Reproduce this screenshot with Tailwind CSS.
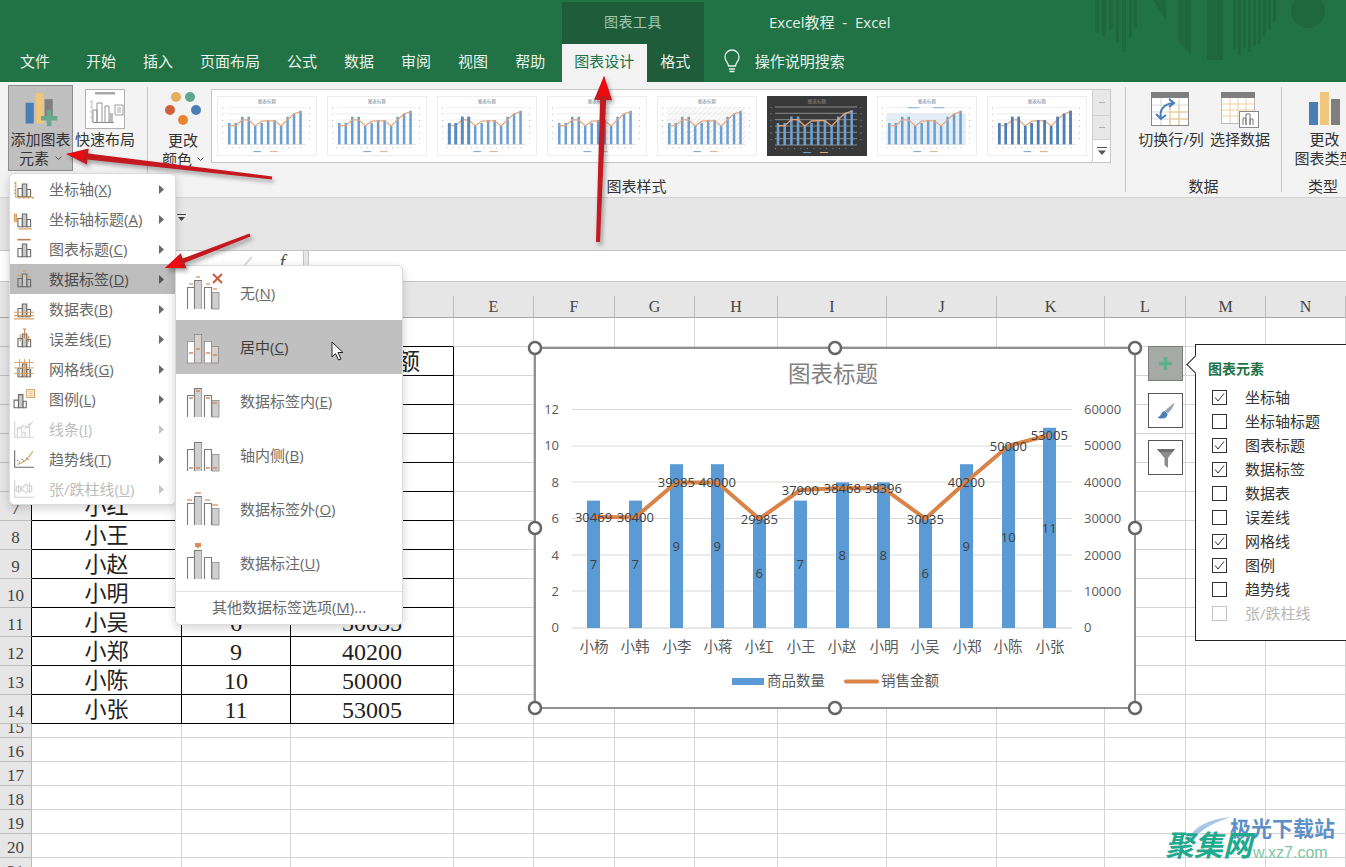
<!DOCTYPE html>
<html lang="zh-CN">
<head>
<meta charset="utf-8">
<title>Excel教程 - Excel</title>
<script src="https://cdn.jsdelivr.net/npm/@tailwindcss/browser@4"></script>
</head>
<body>
<svg class="absolute w-0 h-0" aria-hidden="true">
  <defs>
    <pattern id="hatch" width="5" height="5" patternUnits="userSpaceOnUse"><path d="M0 5L5 0M-1 1L1 -1M4 6L6 4" stroke="#d5d5d5" stroke-width=".8"/></pattern>
    <symbol id="mini" viewBox="0 0 100 60">
      <text x="50" y="6.5" font-size="4.6" text-anchor="middle" fill="#8a8a8a">图表标题</text>
      <path d="M8 11H90M8 17.3H90M8 23.7H90M8 30H90M8 36.3H90M8 42.7H90" stroke="#dedede" stroke-width=".5"/>
      <path d="M8 49H90" stroke="#c5c5c5" stroke-width=".6"/>
      <path d="M4 11V49M94 11V49M8 52.5H90" stroke="#a0a0a0" stroke-width="1.2" stroke-dasharray=".8 5.6"/>
      <path d="M11 49V27M17.7 49V27M24.4 49V20.5M31.1 49V20.5M37.8 49V30M44.5 49V27M51.2 49V23.7M57.9 49V23.7M64.6 49V30M71.3 49V20.5M78 49V17.3M84.7 49V14.2" stroke="#6c9fd2" stroke-width="2.6"/>
      <polyline points="11,29.7 17.7,29.7 24.4,23.7 31.1,23.7 37.8,30 44.5,25 51.2,24.6 57.9,24.7 64.6,30 71.3,23.5 78,17.3 84.7,15.4" fill="none" stroke="#e5a77c" stroke-width="1.3"/>
      <path d="M36 56.5H44" stroke="#6c9fd2" stroke-width="1"/><path d="M53 56.5H61" stroke="#e5a77c" stroke-width="1"/>
    </symbol>
    <symbol id="smallbars" viewBox="0 0 20 20">
      <path d="M4.5 17V9.5H8.5V17ZM12.5 17V10.5H16V17Z" fill="none" stroke="#6a6a6a" stroke-width="1"/>
      <path d="M8.5 17V5.5H12.5V17Z" fill="#c9c9c9" stroke="#6a6a6a" stroke-width="1"/>
    </symbol>
    <symbol id="bigbars" viewBox="0 0 40 40">
      <path d="M1.5 36V14.500H8.500M15.500 36V7.500H8.500V36M18.500 36V14.500H25.500V36" fill="none" stroke="#7a7a7a" stroke-width="1.100"/>
      <rect x="9" y="8" width="6.500" height="28" fill="#cfcfcf"/>
      <rect x="26" y="19.500" width="7" height="16.500" fill="#cfcfcf" stroke="#8a8a8a" stroke-width=".8"/>
    </symbol>
    <symbol id="bigbarswhite" viewBox="0 0 40 40">
      <rect x="1.500" y="14.500" width="7" height="21.500" fill="#fff" stroke="#8a8a8a" stroke-width=".8"/>
      <rect x="8.500" y="7.500" width="7" height="28.500" fill="#d8d0cc" stroke="#8a8a8a" stroke-width=".8"/>
      <rect x="18.500" y="14.500" width="7" height="21.500" fill="#fff" stroke="#8a8a8a" stroke-width=".8"/>
      <rect x="25.500" y="19.500" width="7" height="16.500" fill="#d8d0cc" stroke="#8a8a8a" stroke-width=".8"/>
    </symbol>
  </defs>
</svg>

<div class="relative w-[1346px] h-[867px] overflow-hidden bg-white flex flex-col font-['Open_Sans','Noto_Sans_CJK_SC',sans-serif] text-[15px] text-[#333]">

  <!-- Title area -->
  <header class="relative h-[82px] shrink-0 bg-[#217346] flex flex-col text-[#e9f2ec]">
    <svg class="absolute left-[1090px] top-0 w-[240px] h-[62px]" viewBox="1090 0 240 62" fill="#1f673f">
      <path d="M1095 0h4v33h-4zM1102 0h4v36h-4zM1109 0h4v30h-4zM1116 0h3v42h-3zM1122 0h4v52h-4zM1129 0h3v38h-3zM1134 0h3v28h-3z"/>
      <path d="M1153 0h13v20z"/>
      <path d="M1178 0h13v54l-13-12zM1207 0h16v60h-16z"/>
      <path d="M1233 0h3v50h-3zM1238 0h3v55h-3zM1243 0h3v48h-3zM1248 0h3v52h-3zM1253 0h3v46h-3zM1258 0h3v44h-3zM1263 0h3v36h-3zM1268 0h3v30h-3zM1273 0h3v22h-3z"/>
      <circle cx="1308" cy="11" r="17"/>
    </svg>
    <div class="relative h-[44px] flex pl-[562px]">
      <div class="w-[142px] mt-[2px] bg-[#1f5c3a] text-[#9fc9b0] text-center text-[14px] leading-[40px] tracking-[0.5px]">图表工具</div>
      <div class="ml-[65px] leading-[44px] whitespace-pre text-[#e3f0e8]">Excel教程  -  Excel</div>
    </div>
    <nav class="relative h-[38px] flex pl-[6.5px] leading-[34px]">
      <div class="px-[13.5px] mr-[9px]">文件</div>
      <div class="px-[13.5px]">开始</div>
      <div class="px-[13.5px]">插入</div>
      <div class="px-[13.5px]">页面布局</div>
      <div class="px-[13.5px]">公式</div>
      <div class="px-[13.5px]">数据</div>
      <div class="px-[13.5px]">审阅</div>
      <div class="px-[13.5px]">视图</div>
      <div class="px-[13.5px] mr-[3px]">帮助</div>
      <div class="w-[85px] bg-[#f3f3f3] text-[#217346] text-center">图表设计</div>
      <div class="w-[57px] bg-[#1f5c3a] text-center">格式</div>
      <svg class="w-[20px] h-[26px] ml-[18px] mt-[4px]" viewBox="0 0 20 26" fill="none" stroke="#e9f2ec" stroke-width="1.300">
        <path d="M6.500 18c0-3-3.500-4.500-3.500-9a7 7 0 0 1 14 0c0 4.500-3.500 6-3.500 9z"/>
        <path d="M7 21h6M7.500 23.500h5"/>
      </svg>
      <div class="ml-[13px]">操作说明搜索</div>
    </nav>
  </header>

  <!-- Ribbon -->
  <section class="h-[116px] shrink-0 bg-[#f3f3f3] border-b border-[#d2d2d2] flex items-start">
    <div class="ml-[8px] mt-[3px] w-[65px] h-[86px] shrink-0 bg-[#bfbfbf] border border-[#8c8c8c] flex flex-col items-center text-center leading-[19px]">
      <svg class="w-[40px] h-[38px] mt-[5px] shrink-0" viewBox="0 0 40 42">
        <rect x="3" y="13" width="9" height="23" fill="#4a7fb6"/>
        <rect x="14" y="2" width="9" height="34" rx="2" fill="#f0c67c"/>
        <rect x="24" y="9" width="9" height="23" fill="#7f7f7f"/>
        <path d="M29 21V39M20 30H38" stroke="#6aa88a" stroke-width="5"/>
      </svg>
      <div class="mt-[1px] whitespace-nowrap">添加图表</div>
      <div class="flex items-center gap-[6px]">元素<svg class="w-[7px] h-[5px]" viewBox="0 0 7 5" fill="none" stroke="#555" stroke-width="1"><path d="M.5 .5L3.500 3.500L6.500 .500"/></svg></div>
    </div>
    <div class="ml-[2px] mt-[3px] w-[60px] h-[86px] shrink-0 flex flex-col items-center text-center leading-[19px]">
      <svg class="w-[40px] h-[40px] mt-[4px] shrink-0" viewBox="0 0 40 40">
        <rect x=".5" y=".5" width="39" height="39" fill="#fff" stroke="#b0b0b0"/>
        <rect x="10" y="3" width="20" height="2.500" fill="#a8a8a8"/>
        <path d="M7 11v22M5 13h2M5 18h2M5 23h2M5 28h2" stroke="#b5b5b5" stroke-width=".8"/>
        <path d="M8 33V21h4v12M12 33V14h5v19M20 33V17h4v16" fill="none" stroke="#888" stroke-width=".9"/>
        <rect x="24" y="24" width="4" height="9" fill="#bbb"/>
        <path d="M8 33.500H29" stroke="#888"/>
        <rect x="30" y="16" width="8" height="10" fill="#fff" stroke="#888" stroke-width=".8"/>
        <path d="M32 19h4M32 21h4M32 23h4" stroke="#888" stroke-width=".7"/>
      </svg>
      <div class="mt-[1px] whitespace-nowrap">快速布局</div>
    </div>
    <div class="ml-[12px] mt-[5px] w-[979px] h-[105px] shrink-0 flex flex-col border-l border-[#c8c8c8] border-r">
      <div class="flex items-start">
        <div class="w-[63px] pl-[7px] flex flex-col items-center leading-[19px] shrink-0">
          <svg class="w-[40px] h-[38px] mt-[2px]" viewBox="0 0 40 38">
            <circle cx="13" cy="8" r="5" fill="#e4b05f"/><circle cx="27" cy="8" r="5" fill="#5fa88e"/>
            <circle cx="7" cy="21" r="5" fill="#d0603c"/><circle cx="33" cy="21" r="5" fill="#4a80b5"/>
            <circle cx="20" cy="31" r="5" fill="#e8862e"/>
          </svg>
          <div class="mt-[4px]">更改</div>
          <div class="flex items-center gap-[5px] whitespace-nowrap">颜色<svg class="w-[7px] h-[5px]" viewBox="0 0 7 5" fill="none" stroke="#555" stroke-width="1"><path d="M.5 .5L3.500 3.500L6.500 .500"/></svg></div>
        </div>
        <div class="mt-[2px] w-[900px] h-[74px] bg-white border border-[#c8c8c8] flex items-center pl-[5px] gap-[10px] relative shrink-0">
          <svg class="w-[100px] h-[60px] shrink-0 border border-[#eeeeee]" viewBox="0 0 100 60"><use href="#mini" width="100" height="60"/></svg>
          <svg class="w-[100px] h-[60px] shrink-0 border border-[#eeeeee]" viewBox="0 0 100 60"><use href="#mini" width="100" height="60"/></svg>
          <svg class="w-[100px] h-[60px] shrink-0 border border-[#eeeeee]" viewBox="0 0 100 60"><use href="#mini" width="100" height="60"/><path d="M11 49V27M17.7 49V27M24.4 49V20.5M31.1 49V20.5" stroke="#5a8cc0" stroke-width="3"/></svg>
          <svg class="w-[100px] h-[60px] shrink-0 border border-[#eeeeee]" viewBox="0 0 100 60"><use href="#mini" width="100" height="60"/></svg>
          <svg class="w-[100px] h-[60px] shrink-0 border border-[#eeeeee]" viewBox="0 0 100 60"><rect x="8" y="11" width="82" height="38" fill="url(#hatch)"/><use href="#mini" width="100" height="60"/></svg>
          <svg class="w-[100px] h-[60px] shrink-0 bg-[#3a3a3a]" viewBox="0 0 100 60"><rect width="100" height="60" fill="#393939"/><use href="#mini" width="100" height="60"/></svg>
          <svg class="w-[100px] h-[60px] shrink-0 border border-[#eeeeee]" viewBox="0 0 100 60"><rect x="8" y="17" width="82" height="32" fill="#e5eef8"/><use href="#mini" width="100" height="60"/><path d="M30 11H42M56 11H68" stroke="#9ab9dc" stroke-width="1.200"/></svg>
          <svg class="w-[100px] h-[60px] shrink-0 border border-[#eeeeee]" viewBox="0 0 100 60"><use href="#mini" width="100" height="60"/><path d="M11 49V27M17.7 49V27M24.4 49V20.5M31.1 49V20.500M37.8 49V30M44.500 49V27M51.200 49V23.700M57.900 49V23.700M64.600 49V30M71.300 49V20.500M78 49V17.300M84.700 49V14.200" stroke="#4f7fb2" stroke-width="2.600"/></svg>
          <div class="absolute right-0 top-0 w-[18px] h-full flex flex-col border-l border-[#d0d0d0]">
            <div class="h-[26px] bg-[#e8e8e8] border-b border-[#d0d0d0] flex items-center justify-center"><div class="w-[6px] h-[1px] bg-[#b0b0b0]"></div></div>
            <div class="h-[24px] bg-[#e8e8e8] border-b border-[#d0d0d0] flex items-center justify-center"><div class="w-[6px] h-[1px] bg-[#b0b0b0]"></div></div>
            <div class="flex-1 flex items-center justify-center"><svg class="w-[10px] h-[9px]" viewBox="0 0 10 9"><path d="M0 .5H10" stroke="#555"/><path d="M1 3.500H9L5 8z" fill="#555"/></svg></div>
          </div>
        </div>
      </div>
      <div class="mt-auto -mb-[4px] text-center leading-[20px]">图表样式</div>
    </div>
    <div class="mt-[5px] w-[156px] h-[105px] flex flex-col border-r border-[#c8c8c8] shrink-0">
      <div class="flex pl-[11px] leading-[19px]">
        <div class="w-[68px] flex flex-col items-center">
          <svg class="w-[38px] h-[34px] mt-[5px] ml-[-2px]" viewBox="0 0 38 34">
            <rect x=".5" y=".5" width="37" height="33" fill="#fff" stroke="#888"/>
            <rect x="0" y="0" width="38" height="6" fill="#7f7f7f"/>
            <path d="M1 13H37M1 20H37M1 27H37M10 6V33M19 6V33M28 6V33" stroke="#d8d8d8"/>
            <path d="M19 20H37M19 27H37M19 13V33M28 13V33" stroke="#efc88a"/>
            <path d="M10 26c-2-8 3-14 12-15M18 7l5 4-5 4M5 22l5 5 5-4" fill="none" stroke="#4a7fb6" stroke-width="2"/>
          </svg>
          <div class="mt-[4px] whitespace-nowrap">切换行/列</div>
        </div>
        <div class="w-[66px] ml-[2px] flex flex-col items-center">
          <svg class="w-[38px] h-[36px] mt-[5px]" viewBox="0 0 38 36">
            <rect x=".5" y=".5" width="33" height="31" fill="#fff" stroke="#bbb"/>
            <rect x="0" y="0" width="34" height="6" fill="#7f7f7f"/>
            <path d="M1 12H33M1 18H33M1 24H33M9 6V31M17 6V31M25 6V31" stroke="#efcf9f"/>
            <rect x="18.500" y="19.500" width="19" height="16" fill="#fff" stroke="#888"/>
            <path d="M22 33V26h3v7M25 33V22h4v11M29 33V27h3v6" fill="none" stroke="#777"/>
          </svg>
          <div class="mt-[2px] whitespace-nowrap">选择数据</div>
        </div>
      </div>
      <div class="mt-auto -mb-[4px] text-center leading-[20px]">数据</div>
    </div>
    <div class="mt-[5px] w-[82px] h-[105px] flex flex-col shrink-0">
      <div class="flex flex-col items-center leading-[19px] pl-[3px]">
        <svg class="w-[32px] h-[33px] mt-[5px]" viewBox="0 0 32 33">
          <rect x="0" y="10" width="9" height="23" fill="#4a7fb6"/><rect x="11" y="0" width="9" height="33" fill="#f0c67c"/><rect x="22" y="7" width="9" height="26" fill="#7f7f7f"/>
        </svg>
        <div class="mt-[5px]">更改</div>
        <div class="whitespace-nowrap">图表类型</div>
      </div>
      <div class="mt-auto -mb-[4px] text-center leading-[20px]">类型</div>
    </div>
  </section>

  <!-- Gray band -->
  <div class="h-[52px] shrink-0 bg-[#e6e6e6] flex items-center pl-[177px] pb-[12px]">
    <svg class="w-[9px] h-[8px]" viewBox="0 0 9 8"><path d="M0 .5H9" stroke="#444"/><path d="M1 3H8L4.500 7z" fill="#444"/></svg>
  </div>

  <!-- Formula bar -->
  <div class="h-[31px] shrink-0 flex bg-[#e6e6e6] border-t border-[#c4c4c4]">
    <div class="w-[304px] bg-white border-r border-[#c4c4c4] flex justify-end pr-[18px] font-['Liberation_Serif',serif] italic text-[20px] leading-[22px] text-[#555]">
      <svg class="w-[10px] h-[12px] mr-[26px] mt-[4px]" viewBox="0 0 10 12"><path d="M1 11L9 2" stroke="#cfcfcf" stroke-width="1.500"/></svg>f</div>
    <div class="ml-[4px] flex-1 bg-white border-l border-[#c4c4c4]"></div>
  </div>
  <div class="h-[15px] shrink-0 bg-[#e6e6e6] border-t border-[#c4c4c4]"></div>

  <!-- Sheet -->
  <table class="table-fixed w-[1346px] shrink-0 border-separate border-spacing-0 font-['Liberation_Serif','Noto_Sans_CJK_SC',serif] [&_th]:p-0 [&_th]:font-normal [&_th]:leading-none [&_th]:bg-[#e6e6e6] [&_th]:text-[#444] [&_th]:border-r [&_th]:border-b [&_th]:border-[#bcbcbc] [&_td]:p-0 [&_td]:pt-[2px] [&_td]:text-center [&_td]:text-[24px] [&_td]:leading-none [&_td]:text-[#222] [&_td]:border-r [&_td]:border-b [&_td]:border-[#d4d4d4]">
    <colgroup>
      <col class="w-[32px]"><col class="w-[150px]"><col class="w-[109px]"><col class="w-[163px]"><col class="w-[80px]"><col class="w-[81px]"><col class="w-[80px]"><col class="w-[83px]"><col class="w-[109px]"><col class="w-[110px]"><col class="w-[108px]"><col class="w-[81px]"><col class="w-[80px]"><col class="w-[80px]">
    </colgroup>
    <thead class="text-[16px] [&_th]:h-[22px] [&_th]:border-b-[#a8a8a8]">
      <tr><th></th><th>B</th><th>C</th><th>D</th><th>E</th><th>F</th><th>G</th><th>H</th><th>I</th><th>J</th><th>K</th><th>L</th><th>M</th><th>N</th></tr>
    </thead>
    <tbody class="[&_th]:text-[17px] [&_th]:pt-[4px]! [&>tr>td:nth-child(2)]:text-[22px] [&>tr:nth-child(1)>td:nth-child(-n+4)]:border-b-black [&>tr:nth-child(n+2):nth-child(-n+14)>td:nth-child(-n+4)]:border-black [&>tr:nth-child(n+2):nth-child(-n+14)>th]:border-r-black [&>tr:nth-child(-n+14)]:h-[29px] [&>tr:nth-child(15)]:h-[14px] [&>tr:nth-child(n+16)]:h-[24px]">
      <tr><th>1</th><td></td><td></td><td></td><td></td><td></td><td></td><td></td><td></td><td></td><td></td><td></td><td></td><td></td></tr>
      <tr><th>2</th><td>姓名</td><td>数量</td><td>销售金额</td><td></td><td></td><td></td><td></td><td></td><td></td><td></td><td></td><td></td><td></td></tr>
      <tr><th>3</th><td>小杨</td><td>7</td><td>30469</td><td></td><td></td><td></td><td></td><td></td><td></td><td></td><td></td><td></td><td></td></tr>
      <tr><th>4</th><td>小韩</td><td>7</td><td>30400</td><td></td><td></td><td></td><td></td><td></td><td></td><td></td><td></td><td></td><td></td></tr>
      <tr><th>5</th><td>小李</td><td>9</td><td>39985</td><td></td><td></td><td></td><td></td><td></td><td></td><td></td><td></td><td></td><td></td></tr>
      <tr><th>6</th><td>小蒋</td><td>9</td><td>40000</td><td></td><td></td><td></td><td></td><td></td><td></td><td></td><td></td><td></td><td></td></tr>
      <tr><th>7</th><td>小红</td><td>6</td><td>29985</td><td></td><td></td><td></td><td></td><td></td><td></td><td></td><td></td><td></td><td></td></tr>
      <tr><th>8</th><td>小王</td><td>7</td><td>37900</td><td></td><td></td><td></td><td></td><td></td><td></td><td></td><td></td><td></td><td></td></tr>
      <tr><th>9</th><td>小赵</td><td>8</td><td>38468</td><td></td><td></td><td></td><td></td><td></td><td></td><td></td><td></td><td></td><td></td></tr>
      <tr><th>10</th><td>小明</td><td>8</td><td>38396</td><td></td><td></td><td></td><td></td><td></td><td></td><td></td><td></td><td></td><td></td></tr>
      <tr><th>11</th><td>小吴</td><td>6</td><td>30035</td><td></td><td></td><td></td><td></td><td></td><td></td><td></td><td></td><td></td><td></td></tr>
      <tr><th>12</th><td>小郑</td><td>9</td><td>40200</td><td></td><td></td><td></td><td></td><td></td><td></td><td></td><td></td><td></td><td></td></tr>
      <tr><th>13</th><td>小陈</td><td>10</td><td>50000</td><td></td><td></td><td></td><td></td><td></td><td></td><td></td><td></td><td></td><td></td></tr>
      <tr><th>14</th><td>小张</td><td>11</td><td>53005</td><td></td><td></td><td></td><td></td><td></td><td></td><td></td><td></td><td></td><td></td></tr>
      <tr><th><div class="-mt-[4px] h-[13px] overflow-hidden leading-[8px]">15</div></th><td></td><td></td><td></td><td></td><td></td><td></td><td></td><td></td><td></td><td></td><td></td><td></td><td></td></tr>
      <tr><th>16</th><td></td><td></td><td></td><td></td><td></td><td></td><td></td><td></td><td></td><td></td><td></td><td></td><td></td></tr>
      <tr><th>17</th><td></td><td></td><td></td><td></td><td></td><td></td><td></td><td></td><td></td><td></td><td></td><td></td><td></td></tr>
      <tr><th>18</th><td></td><td></td><td></td><td></td><td></td><td></td><td></td><td></td><td></td><td></td><td></td><td></td><td></td></tr>
      <tr><th>19</th><td></td><td></td><td></td><td></td><td></td><td></td><td></td><td></td><td></td><td></td><td></td><td></td><td></td></tr>
      <tr><th>20</th><td></td><td></td><td></td><td></td><td></td><td></td><td></td><td></td><td></td><td></td><td></td><td></td><td></td></tr>
      <tr><th>21</th><td></td><td></td><td></td><td></td><td></td><td></td><td></td><td></td><td></td><td></td><td></td><td></td><td></td></tr>
    </tbody>
  </table>

  <!-- Chart (floating object) -->
  <svg class="absolute left-[525px] top-[338px] w-[620px] h-[380px]" viewBox="525 338 620 380">
    <rect x="535" y="348" width="600" height="360" fill="#fff" stroke="#6e6e6e" stroke-width="1.500"/>
    <text x="833" y="382" font-size="22.500" text-anchor="middle" fill="#7f7f7f">图表标题</text>
    <path d="M572 409.500H1072M572 446H1072M572 482H1072M572 518.500H1072M572 555H1072M572 591H1072" stroke="#d9d9d9" stroke-width="1"/>
    <path d="M572 628H1072" stroke="#d0d0d0" stroke-width="1"/>
    <g font-size="13" fill="#595959" text-anchor="end">
      <text x="559" y="414">12</text><text x="559" y="450">10</text><text x="559" y="486.500">8</text><text x="559" y="523">6</text><text x="559" y="559.500">4</text><text x="559" y="595.500">2</text><text x="559" y="632">0</text>
    </g>
    <g font-size="13" fill="#595959">
      <text x="1084" y="414">60000</text><text x="1084" y="450">50000</text><text x="1084" y="486.500">40000</text><text x="1084" y="523">30000</text><text x="1084" y="559.500">20000</text><text x="1084" y="595.500">10000</text><text x="1084" y="632">0</text>
    </g>
    <g fill="#5b9bd5">
      <rect x="587" y="500.600" width="13" height="127.400"/><rect x="629" y="500.600" width="13" height="127.400"/>
      <rect x="670" y="464.200" width="13" height="163.800"/><rect x="711" y="464.200" width="13" height="163.800"/>
      <rect x="753" y="518.800" width="13" height="109.200"/><rect x="794" y="500.600" width="13" height="127.400"/>
      <rect x="836" y="482.400" width="13" height="145.600"/><rect x="877" y="482.400" width="13" height="145.600"/>
      <rect x="919" y="518.800" width="13" height="109.200"/><rect x="960" y="464.200" width="13" height="163.800"/>
      <rect x="1002" y="446" width="13" height="182"/><rect x="1043" y="427.800" width="13" height="200.200"/>
    </g>
    <polyline points="593.300,517 635.300,517.300 676.300,482.500 717.300,482.400 759.300,518.900 800.300,490 842.300,488 883.300,488.200 925.300,518.700 966.300,481.700 1008.300,446 1049.300,435" fill="none" stroke="#d98348" stroke-width="4" stroke-linejoin="round"/>
    <g font-size="13" fill="#404040" text-anchor="middle">
      <text x="593.500" y="569">7</text><text x="635.300" y="569">7</text><text x="676.300" y="551">9</text><text x="717.300" y="551">9</text><text x="759.300" y="578">6</text><text x="800.300" y="569">7</text><text x="842.300" y="560">8</text><text x="883.300" y="560">8</text><text x="925.300" y="578">6</text><text x="966.300" y="551">9</text><text x="1008.300" y="542">10</text><text x="1049.300" y="533">11</text>
      <text x="593.500" y="522">30469</text><text x="635.300" y="522">30400</text><text x="676.300" y="487">39985</text><text x="717.300" y="487">40000</text><text x="759.300" y="524">29985</text><text x="800.300" y="495">37900</text><text x="842.300" y="493">38468</text><text x="883.300" y="493">38396</text><text x="925.300" y="524">30035</text><text x="966.300" y="487">40200</text><text x="1008.300" y="451">50000</text><text x="1049.300" y="440">53005</text>
    </g>
    <g font-size="14.500" fill="#595959" text-anchor="middle">
      <text x="594" y="652">小杨</text><text x="635" y="652">小韩</text><text x="677" y="652">小李</text><text x="718" y="652">小蒋</text><text x="759" y="652">小红</text><text x="801" y="652">小王</text><text x="842" y="652">小赵</text><text x="884" y="652">小明</text><text x="925" y="652">小吴</text><text x="967" y="652">小郑</text><text x="1008" y="652">小陈</text><text x="1050" y="652">小张</text>
    </g>
    <rect x="732" y="678" width="32" height="7" fill="#5b9bd5"/>
    <text x="767" y="686" font-size="14.500" fill="#595959">商品数量</text>
    <path d="M846 681.500H877" stroke="#d98348" stroke-width="4" stroke-linecap="round"/>
    <text x="881" y="686" font-size="14.500" fill="#595959">销售金额</text>
    <g fill="#fff" stroke="#666" stroke-width="2.500">
      <circle cx="535" cy="348" r="6"/><circle cx="835" cy="348" r="6"/><circle cx="1135" cy="348" r="6"/>
      <circle cx="535" cy="528" r="6"/><circle cx="1135" cy="528" r="6"/>
      <circle cx="535" cy="708" r="6"/><circle cx="835" cy="708" r="6"/><circle cx="1135" cy="708" r="6"/>
    </g>
  </svg>

  <!-- Chart side buttons -->
  <div class="absolute left-[1148px] top-[346px] flex flex-col gap-[12px]">
    <div class="w-[35px] h-[35px] bg-[#a6aaa6] border border-[#7c7c7c] flex items-center justify-center">
      <svg class="w-[15px] h-[15px]" viewBox="0 0 15 15"><path d="M7.500 1V14M1 7.500H14" stroke="#5fae8a" stroke-width="3.500"/></svg>
    </div>
    <div class="w-[35px] h-[35px] bg-white border border-[#555] flex items-center justify-center">
      <svg class="w-[20px] h-[20px]" viewBox="0 0 20 20"><path d="M18.500 1.500L9 9.500L11.500 12.500C15 10 17.500 6 18.500 1.500Z" fill="#9aa4ae"/><path d="M9 10C5 10 6 15 1.500 16.500C4 18 11.500 18.500 11.500 13Z" fill="#4a7fb6"/></svg>
    </div>
    <div class="w-[35px] h-[35px] bg-white border border-[#555] flex items-center justify-center">
      <svg class="w-[20px] h-[22px]" viewBox="0 0 20 22"><path d="M1 2H19L12 11V21L8.500 18V11Z" fill="#8c8c8c"/><path d="M1 2H19L16.500 5H3.500Z" fill="#6f6f6f"/></svg>
    </div>
  </div>

  <!-- Chart elements panel -->
  <aside class="absolute left-[1195px] top-[344px] w-[170px] h-[297px] bg-white border border-[#222] pl-[12px] pt-[12px]">
    <div class="absolute -left-[7px] top-[13px] w-[13px] h-[13px] rotate-45 bg-white border-l border-b border-[#222]"></div>
    <div class="relative text-[14px] font-bold leading-[24px] text-[#217346]">图表元素</div>
    <ul class="mt-[4px] pl-[4px] text-[#333]">
      <li class="h-[24px] flex items-center gap-[18px]"><span class="w-[15px] h-[15px] border border-[#333] shrink-0"><svg class="w-[13px] h-[13px]" viewBox="0 0 13 13" fill="none" stroke="#333"><path d="M2 6.500L5 10L11 2.500"/></svg></span>坐标轴</li>
      <li class="h-[24px] flex items-center gap-[18px]"><span class="w-[15px] h-[15px] border border-[#333] shrink-0"></span>坐标轴标题</li>
      <li class="h-[24px] flex items-center gap-[18px]"><span class="w-[15px] h-[15px] border border-[#333] shrink-0"><svg class="w-[13px] h-[13px]" viewBox="0 0 13 13" fill="none" stroke="#333"><path d="M2 6.500L5 10L11 2.500"/></svg></span>图表标题</li>
      <li class="h-[24px] flex items-center gap-[18px]"><span class="w-[15px] h-[15px] border border-[#333] shrink-0"><svg class="w-[13px] h-[13px]" viewBox="0 0 13 13" fill="none" stroke="#333"><path d="M2 6.500L5 10L11 2.500"/></svg></span>数据标签</li>
      <li class="h-[24px] flex items-center gap-[18px]"><span class="w-[15px] h-[15px] border border-[#333] shrink-0"></span>数据表</li>
      <li class="h-[24px] flex items-center gap-[18px]"><span class="w-[15px] h-[15px] border border-[#333] shrink-0"></span>误差线</li>
      <li class="h-[24px] flex items-center gap-[18px]"><span class="w-[15px] h-[15px] border border-[#333] shrink-0"><svg class="w-[13px] h-[13px]" viewBox="0 0 13 13" fill="none" stroke="#333"><path d="M2 6.500L5 10L11 2.500"/></svg></span>网格线</li>
      <li class="h-[24px] flex items-center gap-[18px]"><span class="w-[15px] h-[15px] border border-[#333] shrink-0"><svg class="w-[13px] h-[13px]" viewBox="0 0 13 13" fill="none" stroke="#333"><path d="M2 6.500L5 10L11 2.500"/></svg></span>图例</li>
      <li class="h-[24px] flex items-center gap-[18px]"><span class="w-[15px] h-[15px] border border-[#333] shrink-0"></span>趋势线</li>
      <li class="h-[24px] flex items-center gap-[18px] text-[#b5b5b5]"><span class="w-[15px] h-[15px] border border-[#c4c4c4] shrink-0"></span>张/跌柱线</li>
    </ul>
  </aside>

  <!-- Dropdown menu -->
  <div class="absolute left-[9px] top-[173px] w-[167px] h-[332px] bg-white border border-[#dcdcdc] rounded-[5px] shadow-[0_3px_10px_rgba(0,0,0,0.18)] text-[#696969]">
    <div class="h-[30px] flex items-center">
      <svg class="w-[22px] h-[22px] ml-[3px] shrink-0" viewBox="0 0 20 20"><use href="#smallbars" width="20" height="20"/><path d="M2.500 3V17.500H19M1 5H2.500M1 8H2.500M1 11H2.500M1 14H2.500M6 19V17.500M10 19V17.500M14 19V17.500M18 19V17.500" fill="none" stroke="#d9a05c"/></svg>
      <span class="ml-[14px] whitespace-nowrap">坐标轴(<u>X</u>)</span>
      <svg class="w-[5px] h-[9px] ml-auto mr-[11px]" viewBox="0 0 5 9"><path d="M0 0L5 4.500L0 9Z" fill="#6a6a6a"/></svg>
    </div>
    <div class="h-[30px] flex items-center">
      <svg class="w-[22px] h-[22px] ml-[3px] shrink-0" viewBox="0 0 20 20"><use href="#smallbars" width="20" height="20"/><path d="M1.500 5V13M3 5V13M5 19H17" fill="none" stroke="#d9a05c" stroke-width="1.200"/></svg>
      <span class="ml-[14px] whitespace-nowrap">坐标轴标题(<u>A</u>)</span>
      <svg class="w-[5px] h-[9px] ml-auto mr-[11px]" viewBox="0 0 5 9"><path d="M0 0L5 4.500L0 9Z" fill="#6a6a6a"/></svg>
    </div>
    <div class="h-[30px] flex items-center">
      <svg class="w-[22px] h-[22px] ml-[3px] shrink-0" viewBox="0 0 20 20"><use href="#smallbars" width="20" height="20"/><path d="M4 1.500H16" stroke="#b9825a" stroke-width="1.500"/></svg>
      <span class="ml-[14px] whitespace-nowrap">图表标题(<u>C</u>)</span>
      <svg class="w-[5px] h-[9px] ml-auto mr-[11px]" viewBox="0 0 5 9"><path d="M0 0L5 4.500L0 9Z" fill="#6a6a6a"/></svg>
    </div>
    <div class="h-[30px] flex items-center bg-[#bdbdbd] text-[#4c4c4c]">
      <svg class="w-[22px] h-[22px] ml-[3px] shrink-0" viewBox="0 0 20 20"><use href="#smallbars" width="20" height="20"/><path d="M9 2.500H12M4.500 7H7.500M13 8H16" stroke="#d9a05c" stroke-width="1.200"/></svg>
      <span class="ml-[14px] whitespace-nowrap">数据标签(<u>D</u>)</span>
      <svg class="w-[5px] h-[9px] ml-auto mr-[11px]" viewBox="0 0 5 9"><path d="M0 0L5 4.500L0 9Z" fill="#555"/></svg>
    </div>
    <div class="h-[30px] flex items-center">
      <svg class="w-[22px] h-[22px] ml-[3px] shrink-0" viewBox="0 0 20 20"><use href="#smallbars" width="20" height="20"/><path d="M1 13H19M1 16H19M1 19H19" stroke="#d9a05c"/></svg>
      <span class="ml-[14px] whitespace-nowrap">数据表(<u>B</u>)</span>
      <svg class="w-[5px] h-[9px] ml-auto mr-[11px]" viewBox="0 0 5 9"><path d="M0 0L5 4.500L0 9Z" fill="#6a6a6a"/></svg>
    </div>
    <div class="h-[30px] flex items-center">
      <svg class="w-[22px] h-[22px] ml-[3px] shrink-0" viewBox="0 0 20 20"><use href="#smallbars" width="20" height="20"/><path d="M10.500 1V9M9 1H12M6.500 6V12M14 7V13" stroke="#c98a5a"/></svg>
      <span class="ml-[14px] whitespace-nowrap">误差线(<u>E</u>)</span>
      <svg class="w-[5px] h-[9px] ml-auto mr-[11px]" viewBox="0 0 5 9"><path d="M0 0L5 4.500L0 9Z" fill="#6a6a6a"/></svg>
    </div>
    <div class="h-[30px] flex items-center">
      <svg class="w-[22px] h-[22px] ml-[3px] shrink-0" viewBox="0 0 20 20"><use href="#smallbars" width="20" height="20"/><path d="M1 4H19M1 9H19M1 14H19M6 1V18M10.500 1V18M15 1V18" stroke="#d9a05c" stroke-width=".9"/></svg>
      <span class="ml-[14px] whitespace-nowrap">网格线(<u>G</u>)</span>
      <svg class="w-[5px] h-[9px] ml-auto mr-[11px]" viewBox="0 0 5 9"><path d="M0 0L5 4.500L0 9Z" fill="#6a6a6a"/></svg>
    </div>
    <div class="h-[30px] flex items-center">
      <svg class="w-[22px] h-[22px] ml-[3px] shrink-0" viewBox="0 0 20 20"><path d="M1 18V11H5V18ZM9 18V12H12V18Z" fill="none" stroke="#6a6a6a"/><path d="M5 18V6H9V18Z" fill="#c9c9c9" stroke="#6a6a6a"/><rect x="12.500" y="1.500" width="7" height="7" fill="#fff" stroke="#d9a05c"/><path d="M14 3.500H18M14 5H18M14 6.800H18" stroke="#d9a05c" stroke-width=".7"/></svg>
      <span class="ml-[14px] whitespace-nowrap">图例(<u>L</u>)</span>
      <svg class="w-[5px] h-[9px] ml-auto mr-[11px]" viewBox="0 0 5 9"><path d="M0 0L5 4.500L0 9Z" fill="#6a6a6a"/></svg>
    </div>
    <div class="h-[30px] flex items-center text-[#bdbdbd]">
      <svg class="w-[22px] h-[22px] ml-[3px] shrink-0" viewBox="0 0 20 20" fill="none" stroke="#d8cfd8"><path d="M1.500 3V17.500H19"/><path d="M4 17V9H8V17M8 13H11V17M11 10L15 5V17M3 11L9 7L14 9L18 3"/></svg>
      <span class="ml-[14px] whitespace-nowrap">线条(<u>I</u>)</span>
      <svg class="w-[5px] h-[9px] ml-auto mr-[11px]" viewBox="0 0 5 9"><path d="M0 0L5 4.500L0 9Z" fill="#c4c4c4"/></svg>
    </div>
    <div class="h-[30px] flex items-center">
      <svg class="w-[22px] h-[22px] ml-[3px] shrink-0" viewBox="0 0 20 20" fill="none"><path d="M1.500 2V17.500H19" stroke="#6a6a6a"/><path d="M4 15C9 14 14 10 18 3" stroke="#d9a05c"/><path d="M4 11L6 13M8 10L10 12M12 9L14 11" stroke="#6a6a6a" stroke-dasharray="1 1"/></svg>
      <span class="ml-[14px] whitespace-nowrap">趋势线(<u>T</u>)</span>
      <svg class="w-[5px] h-[9px] ml-auto mr-[11px]" viewBox="0 0 5 9"><path d="M0 0L5 4.500L0 9Z" fill="#6a6a6a"/></svg>
    </div>
    <div class="h-[30px] flex items-center text-[#bdbdbd]">
      <svg class="w-[22px] h-[22px] ml-[3px] shrink-0" viewBox="0 0 20 20" fill="none" stroke="#d0d0d0"><path d="M1.500 2V17.500H19"/><path d="M5 6V14M3 8H7V12H3ZM15 4V14M13 7H17V12H13ZM7 10L13 5M7 10L13 14"/></svg>
      <span class="ml-[14px] whitespace-nowrap">张/跌柱线(<u>U</u>)</span>
      <svg class="w-[5px] h-[9px] ml-auto mr-[11px]" viewBox="0 0 5 9"><path d="M0 0L5 4.500L0 9Z" fill="#c4c4c4"/></svg>
    </div>
  </div>

  <!-- Submenu -->
  <div class="absolute left-[175px] top-[265px] w-[228px] h-[360px] bg-white border border-[#dcdcdc] rounded-[5px] shadow-[0_3px_10px_rgba(0,0,0,0.18)] text-[#696969]">
    <div class="h-[54px] flex items-center pl-[10px] gap-[14px]">
      <svg class="w-[40px] h-[40px] shrink-0" viewBox="0 0 40 40"><use href="#bigbars" width="40" height="40"/><path d="M3 11H7M10 4H14M20 11H24M27 16H31" stroke="#dba57d" stroke-width="1.500"/><path d="M27 1L36 10M36 1L27 10" stroke="#c9573c" stroke-width="1.800"/></svg>
      <span>无(<u>N</u>)</span>
    </div>
    <div class="relative h-[54px] flex items-center pl-[10px] gap-[14px] bg-[#c0c0c0] text-[#3f3f3f]">
      <svg class="w-[40px] h-[40px] shrink-0" viewBox="0 0 40 40"><use href="#bigbarswhite" width="40" height="40"/><path d="M3 26H7M10 22H14M20 26H24M27 28H31" stroke="#d98b5a" stroke-width="1.500"/></svg>
      <span>居中(<u>C</u>)</span>
      <svg class="absolute left-[155px] top-[21px] w-[14px] h-[20px]" viewBox="0 0 14 20"><path d="M1 1V16L4.500 12.700L7.500 19L10 18L7 11.500H12Z" fill="#fff" stroke="#222" stroke-width="1"/></svg>
    </div>
    <div class="h-[54px] flex items-center pl-[10px] gap-[14px]">
      <svg class="w-[40px] h-[40px] shrink-0" viewBox="0 0 40 40"><use href="#bigbars" width="40" height="40"/><path d="M3 17H7M10 10H14M20 17H24M27 22H31" stroke="#d98b5a" stroke-width="1.500"/></svg>
      <span class="whitespace-nowrap">数据标签内(<u>E</u>)</span>
    </div>
    <div class="h-[54px] flex items-center pl-[10px] gap-[14px]">
      <svg class="w-[40px] h-[40px] shrink-0" viewBox="0 0 40 40"><use href="#bigbars" width="40" height="40"/><path d="M3 33H7M10 33H14M20 33H24M27 33H31" stroke="#d98b5a" stroke-width="1.500"/></svg>
      <span>轴内侧(<u>B</u>)</span>
    </div>
    <div class="h-[54px] flex items-center pl-[10px] gap-[14px]">
      <svg class="w-[40px] h-[40px] shrink-0" viewBox="0 0 40 40"><use href="#bigbars" width="40" height="40"/><path d="M1 11H6M9 4H15M19 11H24M26 16H32" stroke="#dba57d" stroke-width="1.500"/></svg>
      <span class="whitespace-nowrap">数据标签外(<u>O</u>)</span>
    </div>
    <div class="h-[54px] flex items-center pl-[10px] gap-[14px]">
      <svg class="w-[40px] h-[40px] shrink-0" viewBox="0 0 40 40"><use href="#bigbars" width="40" height="40"/><path d="M9 0H15V4H13L12 6L11 4H9Z" fill="#d98b5a"/></svg>
      <span>数据标注(<u>U</u>)</span>
    </div>
    <div class="h-[33px] mt-[1px] border-t border-[#e0e0e0] text-center leading-[30px] whitespace-nowrap">其他数据标签选项(<u>M</u>)...</div>
  </div>

  <!-- Watermark -->
  <div class="absolute left-[1165px] top-[812px] w-[180px] h-[52px]">
    <svg class="absolute left-[20px] top-[0px] w-[50px] h-[30px]" viewBox="0 0 50 30" fill="none"><path d="M2 28C10 14 24 7 46 5C30 10 16 17 8 28Z" fill="#a9c6e4"/></svg>
    <div class="absolute left-[65px] top-[4px] text-[21px] leading-[24px] font-bold text-[#5e90c8] whitespace-nowrap">极光下载站</div>
    <div class="absolute left-[88px] top-[31px] text-[16px] leading-[20px] text-[#7cc5a2] whitespace-nowrap font-['Liberation_Sans',sans-serif]">w.xz7.com</div>
    <div class="absolute left-0 top-[17px] text-[29px] leading-[32px] font-bold italic text-[#1fa98e] whitespace-nowrap">聚集网</div>
  </div>

  <!-- Red annotation arrows -->
  <svg class="absolute left-0 top-0 w-[1346px] h-[867px] pointer-events-none drop-shadow-[2px_3px_2px_rgba(0,0,0,0.35)]" viewBox="0 0 1346 867">
    <polygon points="66,154 88.700,148.600 88.100,153.500 272.200,176.500 271.800,179.500 87.500,159.500 86.900,164.400" fill="#c4191f"/>
    <polygon points="165,268 186.500,268.300 184.500,263.100 250.500,236.400 249.500,233.600 182.700,258.500 180.700,253.300" fill="#c4191f"/>
    <polygon points="604,76 612.100,100.300 606.100,100.100 600,242 596,242 600.100,99.900 594.100,99.700" fill="#c4191f"/>
    <polygon points="604,76 610,96 598,96" fill="#ee0a0f"/>
    <polygon points="66,154 84,151 84,160" fill="#ee0a0f"/>
    <polygon points="165,268 182,268 178,256" fill="#ee0a0f"/>
  </svg>
</div>
</body>
</html>
